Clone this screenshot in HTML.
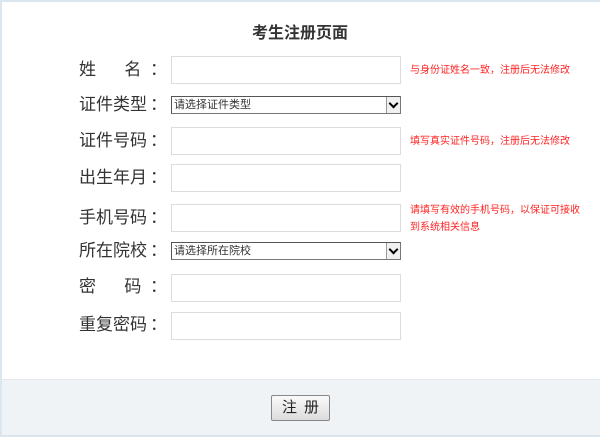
<!DOCTYPE html>
<html><head><meta charset="utf-8"><style>
*{margin:0;padding:0;box-sizing:border-box}
body{width:600px;height:437px;background:#fff;font-family:"Liberation Sans","Noto Sans CJK SC",sans-serif;position:relative;overflow:hidden}
.frame{position:absolute;left:0;top:0;width:602px;height:437px;border:2px solid #dbe6ee;border-right:none}
.title{position:absolute;left:0;width:600px;top:19px;text-align:center;font-size:16px;font-weight:bold;color:#333}
.lab{position:absolute;left:79px;width:82px;font-size:17px;color:#333;line-height:20px;white-space:pre}
.lab:after{content:"：";position:absolute;left:71px;top:0}
.inp{position:absolute;left:171px;width:230px;height:28px;border:1px solid #dcdcdc;background:#fff}
.sel{position:absolute;left:171px;width:230px;height:18px;border:1px solid #777;border-top-color:#555;border-left-color:#555;background:#fff;font-size:11px;color:#333;line-height:16px;padding-left:2px}
.sel .ar{position:absolute;right:0;top:0;width:14px;height:16px;border-left:1px solid #999;background:#f0f0f0}
.sel .ar:after{content:"";position:absolute;left:3px;top:3px;width:5px;height:5px;border-right:2px solid #000;border-bottom:2px solid #000;transform:rotate(45deg)}
.hint{position:absolute;left:410px;font-size:10px;color:#f22;line-height:17px}
.foot{position:absolute;left:2px;top:379px;width:598px;height:56px;background:#f0f3f6;border-top:1px solid #e2e8ee}
.btn{position:absolute;left:271px;top:395px;width:59px;height:26px;border:1px solid #888;border-radius:2px;background:linear-gradient(#fafafa,#dcdcdc);font-size:15px;color:#222;text-align:center;line-height:24px;letter-spacing:7px;padding-left:7px}
</style></head><body>
<div class="frame"></div>
<div class="title">考生注册页面</div>
<div class="lab" style="top:60px">姓      名</div>
<div class="inp" style="top:56px"></div>
<div class="hint" style="top:62px">与身份证姓名一致，注册后无法修改</div>
<div class="lab" style="top:95px">证件类型</div>
<div class="sel" style="top:96px">请选择证件类型<span class="ar"></span></div>
<div class="lab" style="top:131px">证件号码</div>
<div class="inp" style="top:127px"></div>
<div class="hint" style="top:133px">填写真实证件号码，注册后无法修改</div>
<div class="lab" style="top:168px">出生年月</div>
<div class="inp" style="top:164px"></div>
<div class="lab" style="top:208px">手机号码</div>
<div class="inp" style="top:204px"></div>
<div class="hint" style="top:202px">请填写有效的手机号码，以保证可接收<br>到系统相关信息</div>
<div class="lab" style="top:241px">所在院校</div>
<div class="sel" style="top:242px">请选择所在院校<span class="ar"></span></div>
<div class="lab" style="top:277px">密      码</div>
<div class="inp" style="top:274px"></div>
<div class="lab" style="top:315px">重复密码</div>
<div class="inp" style="top:312px"></div>
<div class="foot"></div>
<div class="btn">注册</div>
</body></html>
